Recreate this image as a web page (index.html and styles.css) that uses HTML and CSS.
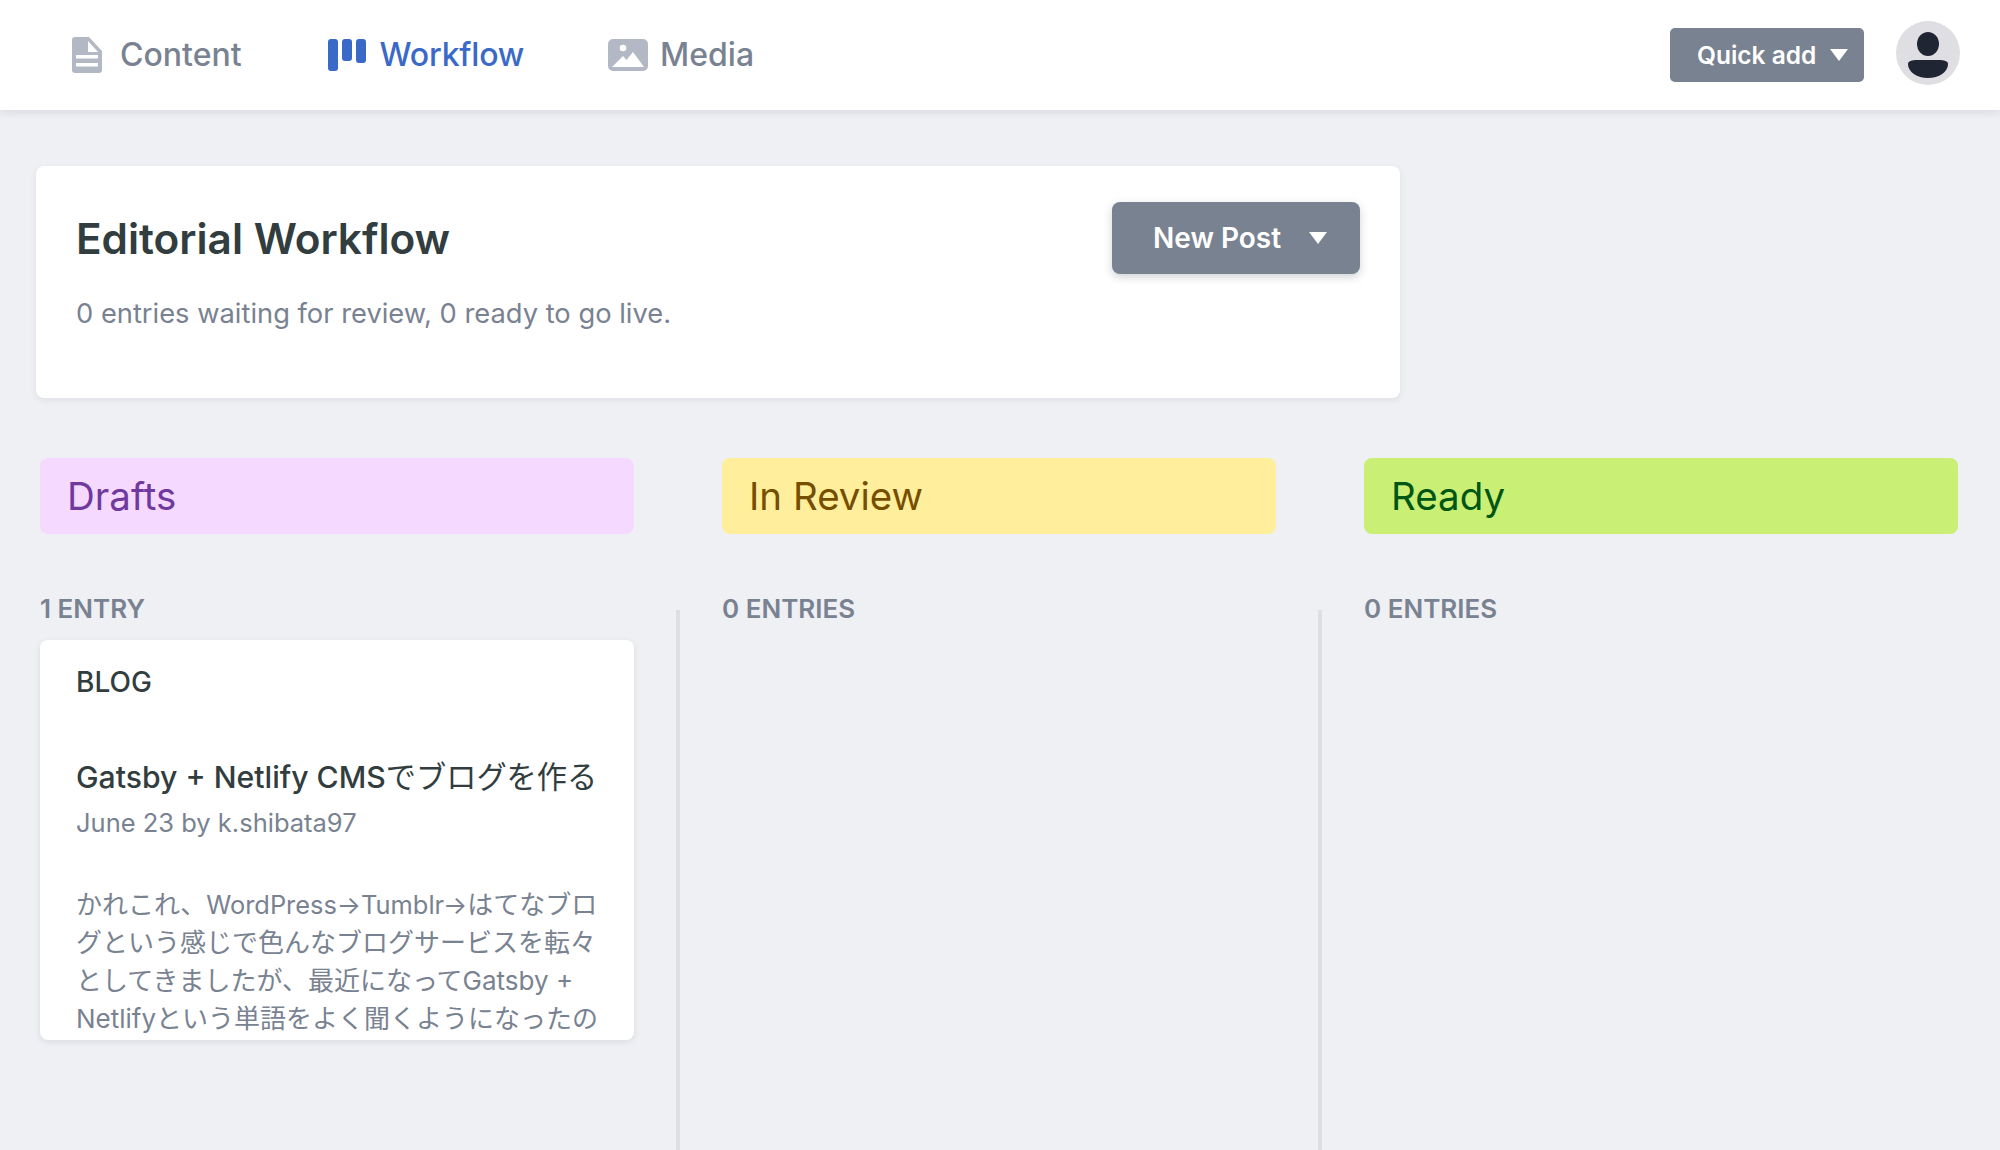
FILE: index.html
```html
<!DOCTYPE html>
<html lang="ja">
<head>
    <meta charset="UTF-8">
    <title>Editorial Workflow</title>
    <link rel="stylesheet" href="styles.css">
</head>
<body>
    <header class="topbar">
        <nav class="nav">
            <a class="nav-link">
                <svg class="icon-content" viewBox="0 0 30 36"><path fill="#b3b9c4" fill-rule="evenodd" d="M3 0h14l13 14v19a3 3 0 0 1-3 3H3a3 3 0 0 1-3-3V3a3 3 0 0 1 3-3zM16 4v11h10zM4 18v3.500h22V18zM4 26v3.500h22V26z"/></svg>
                Content
            </a>
            <a class="nav-link active">
                <svg class="icon-workflow" viewBox="0 0 38 32"><rect width="10" height="32" rx="3" fill="#3a69c7"/><rect x="14" width="10" height="22" rx="3" fill="#3a69c7"/><rect x="28" width="10" height="24" rx="3" fill="#3a69c7"/></svg>
                Workflow
            </a>
            <a class="nav-link">
                <svg class="icon-media" viewBox="0 0 40 32"><path fill="#b3b9c4" fill-rule="evenodd" d="M5 0h30a5 5 0 0 1 5 5v22a5 5 0 0 1-5 5H5a5 5 0 0 1-5-5V5a5 5 0 0 1 5-5zM18.300 9a3.300 3.300 0 1 0-6.600 0 3.300 3.300 0 0 0 6.600 0zM4 28h32L25 13l-6.500 8L15 17z"/></svg>
                Media
            </a>
        </nav>
        <div class="topbar-right">
            <button class="quick-add">Quick add<span class="caret"></span></button>
            <div class="avatar">
                <svg viewBox="0 0 40 46" width="40" height="46"><ellipse cx="20" cy="12" rx="11" ry="12" fill="#1f2532"/><path fill="#1f2532" d="M9 28h22c5 0 9 1 9 4 0 8-9 14-20 14S0 40 0 32c0-3 4-4 9-4z"/></svg>
            </div>
        </div>
    </header>

    <main class="page">
        <section class="intro">
            <div class="intro-head">
                <h1>Editorial Workflow</h1>
                <button class="new-post">New Post<span class="caret"></span></button>
            </div>
            <p>0 entries waiting for review, 0 ready to go live.</p>
        </section>

        <section class="board">
            <h2 class="col-title drafts">Drafts</h2>
            <div class="col-gap"></div>
            <h2 class="col-title review">In Review</h2>
            <div class="col-gap"></div>
            <h2 class="col-title ready">Ready</h2>

            <div class="col">
                <div class="count">1 ENTRY</div>
                <article class="entry">
                    <div class="entry-collection">BLOG</div>
                    <h3>Gatsby + Netlify CMS<span class="cjk">でブログを作る</span></h3>
                    <div class="entry-meta">June 23 by k.shibata97</div>
                    <p>かれこれ、<span class="latin">WordPress→Tumblr→</span>はてなブロ<br>グという感じで色んなブログサービスを転々としてきましたが、最近になってGatsby + Netlifyという単語をよく聞くようになったの</p>
                </article>
            </div>
            <div class="divider"></div>
            <div class="col">
                <div class="count">0 ENTRIES</div>
            </div>
            <div class="divider"></div>
            <div class="col">
                <div class="count">0 ENTRIES</div>
            </div>
        </section>
    </main>
</body>
</html>
```

FILE: styles.css
```css
* {
    box-sizing: border-box;
}

html, body {
    height: 100%;
}

body {
    margin: 0;
    height: 1150px;
    overflow: hidden;
    display: flex;
    flex-direction: column;
    background-color: #eff0f4;
    color: #313d3e;
    font-family: Inter, "Noto Sans CJK JP", sans-serif;
}

.topbar {
    height: 110px;
    flex-shrink: 0;
    display: flex;
    align-items: center;
    justify-content: space-between;
    padding: 0 40px 0 72px;
    background-color: #fff;
    box-shadow: 0 3px 8px rgba(68, 74, 87, 0.12);
}

.nav {
    display: flex;
    align-items: center;
    gap: 84px;
}

.nav-link {
    display: flex;
    align-items: center;
    gap: 14px;
    padding-bottom: 2px;
    font-size: 32px;
    font-weight: 500;
    color: #798291;
}

.nav-link svg {
    margin-top: 2px;
}

.nav-link.active {
    color: #3a69c7;
    letter-spacing: -0.200px;
}

.nav-link:first-child {
    gap: 18px;
    margin-right: 2px;
}

.nav-link:last-child {
    gap: 12px;
}

.icon-content {
    width: 30px;
    height: 36px;
}

.icon-workflow {
    width: 38px;
    height: 32px;
}

.icon-media {
    width: 40px;
    height: 32px;
}

.topbar-right {
    display: flex;
    align-items: center;
    gap: 32px;
}

button {
    display: flex;
    align-items: center;
    border: 0;
    color: #fff;
    background-color: #798291;
    font-family: inherit;
    font-weight: 600;
}

.caret {
    width: 0;
    height: 0;
    border-left: 9px solid transparent;
    border-right: 9px solid transparent;
    border-top: 12px solid #fff;
}

.quick-add {
    width: 194px;
    height: 54px;
    padding: 0 0 0 27px;
    border-radius: 5px;
    font-size: 24.500px;
}

.quick-add .caret {
    margin-left: 14px;
}

.avatar {
    width: 64px;
    height: 64px;
    margin-top: -4px;
    padding-top: 4px;
    border-radius: 50%;
    background-color: #dfdfe3;
    display: flex;
    align-items: center;
    justify-content: center;
}

.page {
    flex: 1;
    display: flex;
    flex-direction: column;
    padding: 56px 42px 0 40px;
    min-height: 0;
}

.intro {
    width: 1364px;
    height: 232px;
    margin-left: -4px;
    padding: 36px 40px;
    background-color: #fff;
    border-radius: 8px;
    box-shadow: 0 2px 6px rgba(68, 74, 87, 0.1);
}

.intro-head {
    display: flex;
    align-items: center;
    justify-content: space-between;
}

h1 {
    margin: 0;
    font-size: 42.300px;
    font-weight: 600;
}

.new-post {
    width: 248px;
    height: 72px;
    padding: 0 0 0 41px;
    border-radius: 8px;
    font-size: 28px;
    box-shadow: 0 3px 9px rgba(68, 74, 87, 0.25);
}

.new-post .caret {
    margin-left: 28px;
}

.intro p {
    margin: 23px 0 0;
    font-size: 27.300px;
    color: #798291;
}

.board {
    flex: 1;
    min-height: 0;
    margin-top: 60px;
    display: grid;
    grid-template-columns: 594px 88px 554px 88px 594px;
    grid-template-rows: 76px 1fr;
}

.col-title {
    margin: 0;
    display: flex;
    align-items: center;
    padding: 0 27px;
    border-radius: 8px;
    font-size: 38.500px;
    font-weight: 400;
}

.col-title.drafts {
    background-color: #f5d9fe;
    color: #70399f;
}

.col-title.review {
    background-color: #ffee9c;
    color: #754e00;
}

.col-title.ready {
    background-color: #caef75;
    color: #005614;
}

.divider {
    width: 4px;
    margin: 76px auto 0;
    background-color: #dfdfe3;
}

.count {
    margin-top: 60px;
    font-size: 26px;
    font-weight: 600;
    line-height: 30px;
    color: #798291;
}

.entry {
    height: 400px;
    margin-top: 16px;
    padding: 24px 34px 0 36px;
    overflow: hidden;
    background-color: #fff;
    border-radius: 8px;
    box-shadow: 0 2px 6px rgba(68, 74, 87, 0.12);
}

.entry-collection {
    font-size: 28px;
    font-weight: 500;
    line-height: 36px;
}

h3 {
    margin: 57px 0 0;
    font-size: 30.200px;
    font-weight: 500;
    line-height: 40px;
}

.cjk {
    font-weight: 400;
}

.entry-meta {
    margin-top: 6px;
    font-size: 25.500px;
    line-height: 40px;
    color: #798291;
}

.entry p {
    margin: 43px 0 0;
    font-size: 26px;
    line-height: 38px;
    color: #798291;
}

.latin {
    font-size: 25.400px;
}
```
